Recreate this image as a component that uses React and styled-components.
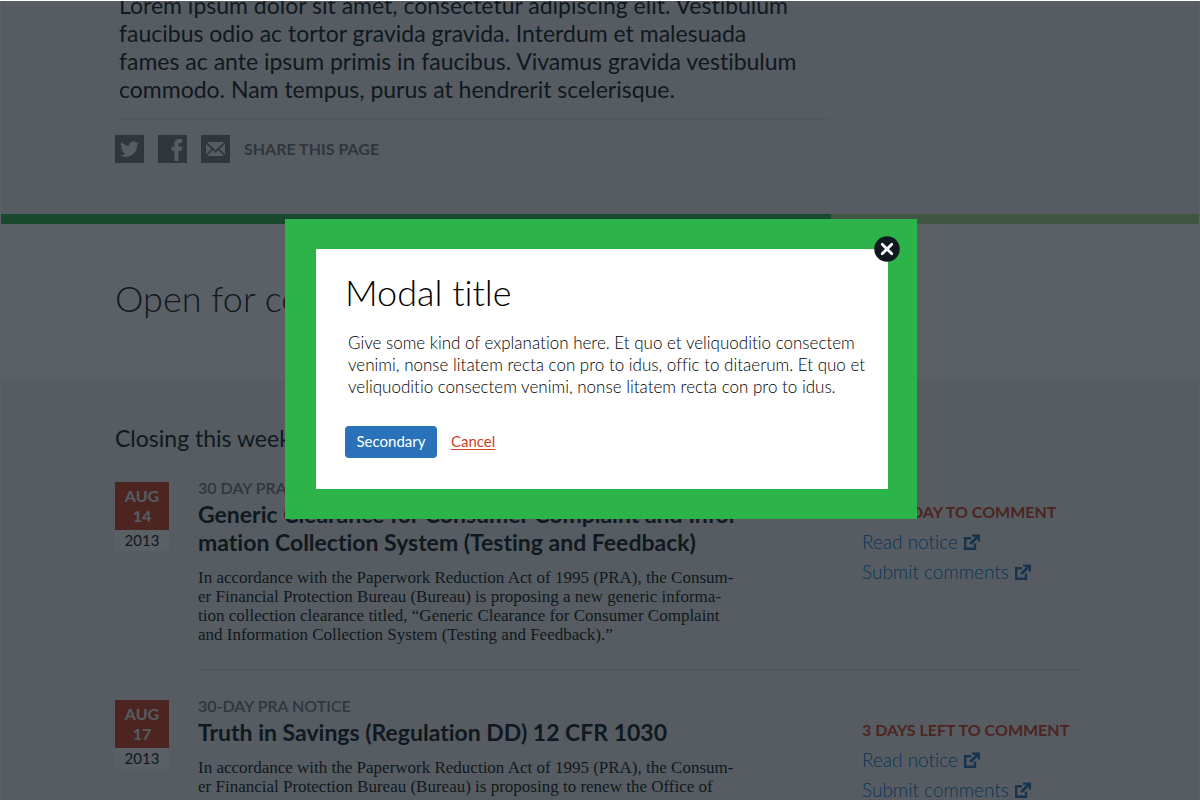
import React from "react";
import styled, { createGlobalStyle } from "styled-components";

const sans = `Lato, "Open Sans", sans-serif`;
const serif = `"Liberation Serif", serif`;

const Global = createGlobalStyle`
  * { box-sizing: border-box; }
  body { margin: 0; background: #fff; font-family: ${sans}; color: #101820; font-variant-ligatures: none; }
  h1, h2, h3, p, ul { margin: 0; padding: 0; font-weight: inherit; }
  ul { list-style: none; }
`;

const Page = styled.div`
  position: relative;
  height: 100vh;
  overflow: hidden;
  padding: 1px;
`;

const Section = styled.section`
  background: ${(p) => p.$bg};
  padding: ${(p) => p.$pad || "0"} 119px 0 114px;
  overflow: hidden;
  min-height: ${(p) => p.$min || "0"};
`;

const Lead = styled.p`
  margin: -10px 0 16px;
  padding-left: 4px;
  font-size: 23px;
  line-height: 28px;
  font-weight: 400;
  white-space: nowrap;
`;

const Share = styled.div`
  display: flex;
  align-items: center;
  gap: 14px;
  width: 716px;
  max-width: 100%;
  border-top: 1px solid #e3e4d8;
  padding: 15px 0 51px;
  color: #75787b;
  font-size: 16px;
  line-height: 20px;
  font-weight: 700;
`;

const ShareLink = styled.a`
  display: block;
  width: 29px;
  height: 28px;
  background: #75787b;
  color: #f1f2f2;
  svg { display: block; width: 100%; height: 100%; }
`;

const Bar = styled.div`
  display: flex;
  height: 10px;
  background: #addc91;
  &::before { content: ""; width: 830px; background: #2cb34a; }
`;

const PageTitle = styled.h1`
  font-size: 36px;
  line-height: 44px;
  font-weight: 300;
`;

const GroupTitle = styled.h2`
  font-size: 23px;
  line-height: 28px;
  margin-bottom: 26px;
`;

const Item = styled.li`
  display: grid;
  grid-template-columns: 54px minmax(0, 1fr);
  column-gap: 29px;
`;

const DateBox = styled.div`
  margin-top: 4px;
  align-self: start;
  background: #fff;
  text-align: center;
  font-size: 15px;
  line-height: 21px;
`;

const Day = styled.div`
  background: #d14124;
  color: #f1f2f2;
  font-size: 16px;
  line-height: 20px;
  font-weight: 700;
  padding: 4px 8px;
`;

const Body = styled.div`
  display: flex;
  justify-content: space-between;
  padding-bottom: 25px;
  margin-bottom: 26px;
  border-bottom: 1px solid #cdd0d2;
  white-space: nowrap;
`;

const Kicker = styled.div`
  color: #75787b;
  font-size: 16px;
  line-height: 20px;
  font-weight: 600;
`;

const ItemTitle = styled.h3`
  margin: 2px 0 12px;
  font-size: 23px;
  line-height: 28px;
  font-weight: 700;
`;

const Summary = styled.p`
  font-family: ${serif};
  font-size: 17px;
  line-height: 19px;
`;

const Side = styled.div`
  width: 218px;
  margin-top: 19px;
  line-height: 30px;
`;

const Deadline = styled.div`
  color: #d14124;
  font-size: 16px;
  font-weight: 700;
`;

const NoticeLink = styled.a`
  display: flex;
  align-items: center;
  gap: 6px;
  color: #0072ce;
  font-size: 19px;
  font-weight: 300;
  text-decoration: none;
  svg { width: 16px; height: 16px; color: #2972b9; }
`;

const Scrim = styled.div`
  position: absolute;
  inset: 1px 0 0;
  background: rgba(16, 24, 32, 0.69);
  display: flex;
  justify-content: center;
  align-items: flex-start;
  padding: 218px 0 0 2px;
`;

const Frame = styled.div`
  width: 632px;
  background: #2cb34a;
  padding: 30px 29px 30px 31px;
`;

const Dialog = styled.div`
  position: relative;
  background: #fff;
  color: #000;
  padding: 21px 0 31px 29px;
`;

const DialogTitle = styled.h2`
  font-size: 36px;
  line-height: 44px;
  font-weight: 300;
`;

const DialogText = styled.p`
  margin: 18px 0 28px;
  padding-left: 3px;
  font-size: 17px;
  line-height: 22px;
  font-weight: 300;
  white-space: nowrap;
`;

const Actions = styled.div`
  display: flex;
  align-items: center;
  gap: 14px;
`;

const Button = styled.button`
  width: 92px;
  height: 32px;
  padding: 0 0 2px;
  border: 0;
  border-radius: 4px;
  background: #2972b9;
  color: #fff;
  font: 400 15px ${sans};
`;

const Cancel = styled.a`
  padding-bottom: 2px;
  color: #d14124;
  font-size: 15px;
  text-underline-offset: 2px;
`;

const Close = styled.button`
  position: absolute;
  top: -13px;
  right: -12px;
  width: 26px;
  height: 26px;
  padding: 0;
  border: 0;
  background: none;
  svg { display: block; }
`;

const Lines = ({ of }) =>
  of.map((t, i) => (
    <React.Fragment key={i}>
      {i > 0 && <br />}
      {t}
    </React.Fragment>
  ));

const External = () => (
  <svg viewBox="0 0 16 16" aria-hidden="true">
    <path d="M7 4.2H1.200V14.800H11V9.500" fill="none" stroke="currentColor" strokeWidth="2.400" />
    <path d="M8 0.500H16V7.500H13.600V4.600L7.200 11L5.200 9L11.400 2.800H8Z" fill="currentColor" />
  </svg>
);

const items = [
  {
    day: "14",
    kicker: "30 DAY PRA NOTICE",
    title: [
      "Generic Clearance for Consumer Complaint and Infor-",
      "mation Collection System (Testing and Feedback)",
    ],
    text: [
      "In accordance with the Paperwork Reduction Act of 1995 (PRA), the Consum-",
      "er Financial Protection Bureau (Bureau) is proposing a new generic informa-",
      "tion collection clearance titled, “Generic Clearance for Consumer Complaint",
      "and Information Collection System (Testing and Feedback).”",
    ],
    deadline: "FINAL DAY TO COMMENT",
  },
  {
    day: "17",
    kicker: "30-DAY PRA NOTICE",
    title: ["Truth in Savings (Regulation DD) 12 CFR 1030"],
    text: [
      "In accordance with the Paperwork Reduction Act of 1995 (PRA), the Consum-",
      "er Financial Protection Bureau (Bureau) is proposing to renew the Office of",
    ],
    deadline: "3 DAYS LEFT TO COMMENT",
  },
];

export default function App() {
  return (
    <Page>
      <Global />
      <Section $bg="#f1f2f2">
        <Lead>
          <Lines
            of={[
              "Lorem ipsum dolor sit amet, consectetur adipiscing elit. Vestibulum",
              "faucibus odio ac tortor gravida gravida. Interdum et malesuada",
              "fames ac ante ipsum primis in faucibus. Vivamus gravida vestibulum",
              "commodo. Nam tempus, purus at hendrerit scelerisque.",
            ]}
          />
        </Lead>
        <Share>
          <ShareLink href="#twitter" aria-label="Twitter">
            <svg viewBox="0 0 29 28">
              <path
                fill="currentColor"
                d="M24 8.2c-.7.3-1.400.5-2.200.6.8-.5 1.400-1.200 1.700-2.100-.7.4-1.600.8-2.400.9a3.900 3.900 0 0 0-6.700 3.500C11.200 10.900 8.300 9.400 6.400 7a3.900 3.900 0 0 0 1.200 5.200c-.6 0-1.200-.2-1.800-.5 0 1.900 1.300 3.500 3.100 3.900-.6.2-1.200.2-1.800.1.5 1.500 1.900 2.600 3.600 2.700A7.800 7.800 0 0 1 5 20a11 11 0 0 0 17-9.800c.8-.5 1.500-1.200 2-2z"
              />
            </svg>
          </ShareLink>
          <ShareLink href="#facebook" aria-label="Facebook">
            <svg viewBox="0 0 29 28">
              <path
                fill="currentColor"
                d="M16.300 26V15.700H13.500V11.800H16.300V9C16.300 5.900 18.200 4.100 21.200 4.100H24V8H22C20.700 8 20.500 8.600 20.500 9.600V11.800H24.200L23.700 15.700H20.500V26Z"
              />
            </svg>
          </ShareLink>
          <ShareLink href="#email" aria-label="Email">
            <svg viewBox="0 0 29 28">
              <rect x="5" y="7" width="19" height="14" fill="currentColor" />
              <path d="M5 7.500L14.500 16.500L24 7.500M5 20.800L11.500 14M24 20.800L17.500 14" fill="none" stroke="#75787b" strokeWidth="1.800" />
            </svg>
          </ShareLink>
          <span>SHARE THIS PAGE</span>
        </Share>
      </Section>
      <Bar />
      <Section $bg="#fff" $pad="52px" $min="156px">
        <PageTitle>Open for comment</PageTitle>
      </Section>
      <Section $bg="#f1f2f2" $pad="44px">
        <GroupTitle>Closing this week</GroupTitle>
        <ul>
          {items.map((it) => (
            <Item key={it.day}>
              <DateBox>
                <Day>
                  AUG
                  <br />
                  {it.day}
                </Day>
                2013
              </DateBox>
              <Body>
                <div>
                  <Kicker>{it.kicker}</Kicker>
                  <ItemTitle>
                    <Lines of={it.title} />
                  </ItemTitle>
                  <Summary>
                    <Lines of={it.text} />
                  </Summary>
                </div>
                <Side>
                  <Deadline>{it.deadline}</Deadline>
                  <NoticeLink href="#notice">
                    Read notice <External />
                  </NoticeLink>
                  <NoticeLink href="#comments">
                    Submit comments <External />
                  </NoticeLink>
                </Side>
              </Body>
            </Item>
          ))}
        </ul>
      </Section>
      <Scrim>
        <Frame>
          <Dialog role="dialog" aria-modal="true" aria-labelledby="modal-title">
            <DialogTitle id="modal-title">Modal title</DialogTitle>
            <DialogText>
              <Lines
                of={[
                  "Give some kind of explanation here. Et quo et veliquoditio consectem",
                  "venimi, nonse litatem recta con pro to idus, offic to ditaerum. Et quo et",
                  "veliquoditio consectem venimi, nonse litatem recta con pro to idus.",
                ]}
              />
            </DialogText>
            <Actions>
              <Button type="button">Secondary</Button>
              <Cancel href="#cancel">Cancel</Cancel>
            </Actions>
            <Close type="button" aria-label="Close">
              <svg width="26" height="26" viewBox="0 0 26 26">
                <circle cx="13" cy="13" r="12.800" fill="#101820" />
                <path d="M8.200 8.200L17.800 17.800M17.800 8.200L8.200 17.800" stroke="#fff" strokeWidth="2.800" strokeLinecap="round" />
              </svg>
            </Close>
          </Dialog>
        </Frame>
      </Scrim>
    </Page>
  );
}
